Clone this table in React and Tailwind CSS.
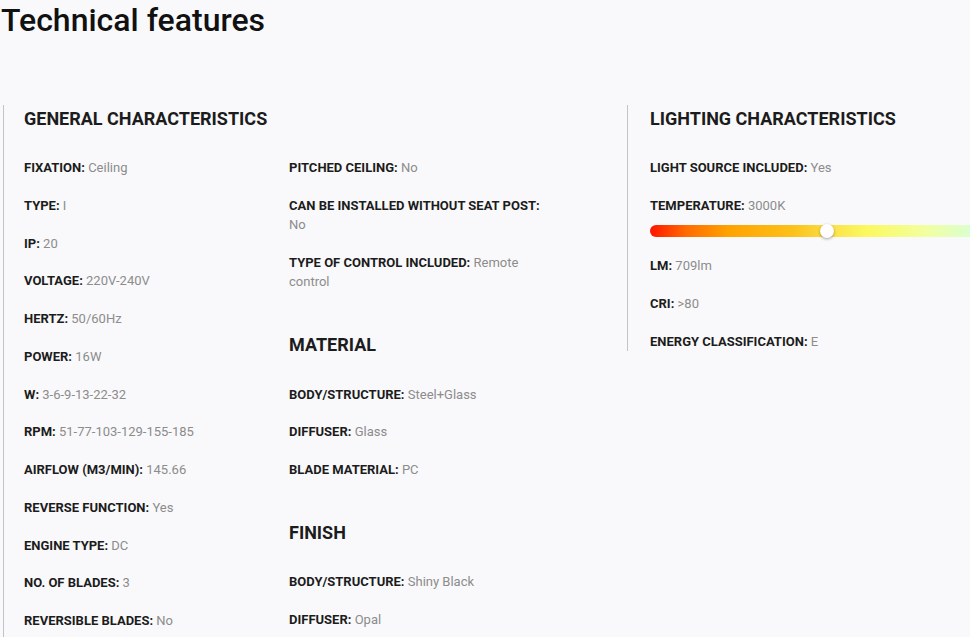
import React from 'react'

const general = [
  ['FIXATION', 'Ceiling'],
  ['TYPE', 'I'],
  ['IP', '20'],
  ['VOLTAGE', '220V-240V'],
  ['HERTZ', '50/60Hz'],
  ['POWER', '16W'],
  ['W', '3-6-9-13-22-32'],
  ['RPM', '51-77-103-129-155-185'],
  ['AIRFLOW (M3/MIN)', '145.66'],
  ['REVERSE FUNCTION', 'Yes'],
  ['ENGINE TYPE', 'DC'],
  ['NO. OF BLADES', '3'],
  ['REVERSIBLE BLADES', 'No'],
]

const generalRight = [
  ['PITCHED CEILING', 'No'],
  ['CAN BE INSTALLED WITHOUT SEAT POST', 'No'],
  ['TYPE OF CONTROL INCLUDED', 'Remote control'],
]

const material = [
  ['BODY/STRUCTURE', 'Steel+Glass'],
  ['DIFFUSER', 'Glass'],
  ['BLADE MATERIAL', 'PC'],
]

const finish = [
  ['BODY/STRUCTURE', 'Shiny Black'],
  ['DIFFUSER', 'Opal'],
]

function Spec({ label, value }) {
  return (
    <div className="text-[13px] leading-[19px]">
      <span className="font-bold text-[#1c1c1c]">{label}:</span>{' '}
      <span className="text-[#8c8c8c]">{value}</span>
    </div>
  )
}

function SpecList({ items }) {
  return (
    <div className="flex flex-col gap-[18.75px]">
      {items.map(([label, value], i) => (
        <Spec key={i} label={label} value={value} />
      ))}
    </div>
  )
}

function Heading({ children, className = '' }) {
  return (
    <h3 className={`text-[18px] leading-[24px] font-bold text-[#1c1c1c] ${className}`}>{children}</h3>
  )
}

export default function App() {
  return (
    <div
      className="w-[970px] h-[637px] overflow-hidden bg-[#f9f9fb]"
      style={{ fontFamily: 'Roboto, "Liberation Sans", sans-serif' }}
    >
      <h1 className="text-[32px] leading-[40px] font-medium text-[#111] pl-[1px]">Technical features</h1>

      <div className="flex mt-[65px] pl-[3px] w-[1400px] items-start">
        {/* General characteristics */}
        <div className="w-[624px] shrink-0 border-l border-[#c4c4c4] pl-5 pt-[2px] h-[600px]">
          <Heading className="mb-[27px]">GENERAL CHARACTERISTICS</Heading>
          <div className="grid grid-cols-[265px_262px]">
            <SpecList items={general} />
            <div>
              <SpecList items={generalRight} />
              <Heading className="mt-[42px] mb-[28px]">MATERIAL</Heading>
              <SpecList items={material} />
              <Heading className="mt-[42px] mb-[27px]">FINISH</Heading>
              <SpecList items={finish} />
            </div>
          </div>
        </div>

        {/* Lighting characteristics */}
        <div className="w-[700px] shrink-0 border-l border-[#c4c4c4] pl-[22px] pt-[2px]">
          <Heading className="mb-[27px]">LIGHTING CHARACTERISTICS</Heading>
          <div className="flex flex-col gap-[19px]">
            <Spec label="LIGHT SOURCE INCLUDED" value="Yes" />
            <div>
              <Spec label="TEMPERATURE" value="3000K" />
              <div className="relative mt-[10px] h-[12px] w-[600px] rounded-full bg-[linear-gradient(90deg,#ff1500_0%,#ff6a00_6%,#ffa200_13%,#fcc21a_24%,#fbe04a_30%,#fbf95e_36%,#f2ffa0_46%,#d2ffe0_56%,#c6f0ff_75%,#a8d8ff_100%)]">
                <div className="absolute left-[170px] top-[-1px] w-[14px] h-[14px] rounded-full bg-white shadow-[0_1px_3px_rgba(0,0,0,0.35)]" />
              </div>
            </div>
            <Spec label="LM" value="709lm" />
            <Spec label="CRI" value=">80" />
            <Spec label="ENERGY CLASSIFICATION" value="E" />
          </div>
        </div>
      </div>
    </div>
  )
}
